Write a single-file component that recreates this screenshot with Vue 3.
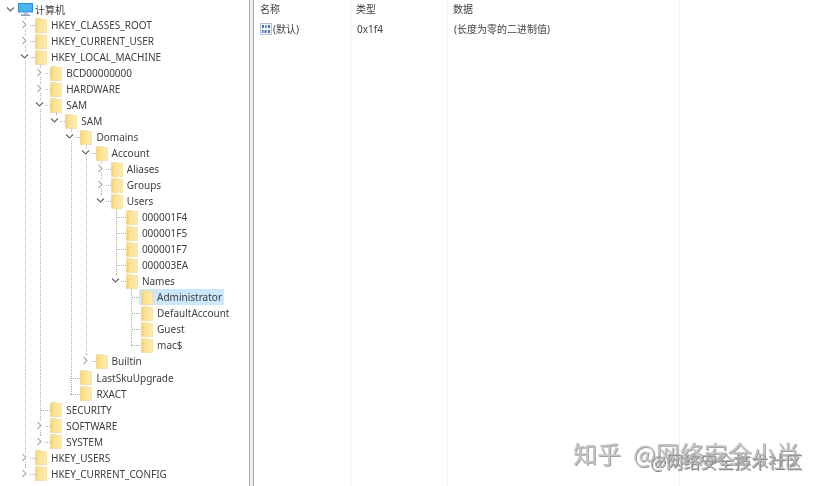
<template>
  <div class="regedit">
    <div class="tree">
      <div class="row root">
        <svg class="chev" width="9" height="9" viewBox="0 0 9 9"><path d="M1 2.5 L4.5 6 L8 2.5" /></svg>
        <svg class="pc" width="15" height="13" viewBox="0 0 15 13">
          <rect x="0" y="0" width="15" height="9.5" fill="#2f8fdc" />
          <rect x="1" y="1" width="13" height="7.5" fill="#4cb4ee" />
          <rect x="5.5" y="9.5" width="4" height="2" fill="#a9bccb" />
          <rect x="3" y="11.5" width="9" height="1.5" fill="#7f9fba" />
        </svg>
        <span class="label">计算机</span>
      </div>
      <div
        v-for="(r, i) in rows"
        :key="i"
        class="row"
        :style="{ paddingLeft: indent(r.level) + 'px' }"
      >
        <span
          v-for="g in r.guides"
          :key="g.x"
          class="guide"
          :class="{ half: g.half }"
          :style="{ left: g.x + 'px' }"
        ></span>
        <span class="slot">
          <span class="hook"></span>
          <svg v-if="r.state" class="chev" width="9" height="9" viewBox="0 0 9 9">
            <path v-if="r.state === 'open'" d="M1 2.5 L4.5 6 L8 2.5" />
            <path v-else class="closed" d="M2.5 1 L6 4.5 L2.5 8" />
          </svg>
        </span>
        <span class="item" :class="{ selected: r.selected }">
          <svg class="folder" width="12" height="15" viewBox="0 0 12 15">
            <defs>
              <linearGradient id="fold" x1="0" y1="0" x2="1" y2="0">
                <stop offset="0" stop-color="#f9dc86" />
                <stop offset="1" stop-color="#fdebb4" />
              </linearGradient>
            </defs>
            <path d="M0.5 0.5 H6 L7 1.5 H11.5 V14.5 H0.5 Z" fill="url(#fold)" stroke="#f0d68e" stroke-width="0.6" />
            <rect x="0.5" y="2.5" width="2" height="12" fill="#f6d472" />
          </svg>
          <span class="label">{{ r.name }}</span>
        </span>
      </div>
    </div>
    <div class="splitter"></div>
    <div class="list">
      <div class="col first">
        <div class="head">名称</div>
        <div class="cell">
          <svg class="bin" width="12" height="12" viewBox="0 0 12 12">
            <rect x="0.5" y="0.5" width="11" height="11" fill="#f4f7fc" stroke="#b4c3dc" />
            <path d="M2 2 H4 V5 H2 Z M5.2 2 H6.6 V5 H5.2 Z M8 2 H10 V5 H8 Z M2 7 H3.4 V10 H2 Z M4.6 7 H6.6 V10 H4.6 Z M8 7 H10 V10 H8 Z" fill="#4a6fb0" />
          </svg>
          <span>(默认)</span>
        </div>
      </div>
      <div class="col">
        <div class="head">类型</div>
        <div class="cell">0x1f4</div>
      </div>
      <div class="col wide">
        <div class="head">数据</div>
        <div class="cell">(长度为零的二进制值)</div>
      </div>
    </div>
    <div class="mark">
      <span class="zh">知乎</span><span class="author">@网络安全小肖</span>
    </div>
    <div class="mark2">@网络安全技术社区</div>
  </div>
</template>

<script setup>
const items = [
  [1, 'HKEY_CLASSES_ROOT', 'closed'],
  [1, 'HKEY_CURRENT_USER', 'closed'],
  [1, 'HKEY_LOCAL_MACHINE', 'open'],
  [2, 'BCD00000000', 'closed'],
  [2, 'HARDWARE', 'closed'],
  [2, 'SAM', 'open'],
  [3, 'SAM', 'open'],
  [4, 'Domains', 'open'],
  [5, 'Account', 'open'],
  [6, 'Aliases', 'closed'],
  [6, 'Groups', 'closed'],
  [6, 'Users', 'open'],
  [7, '000001F4', ''],
  [7, '000001F5', ''],
  [7, '000001F7', ''],
  [7, '000003EA', ''],
  [7, 'Names', 'open'],
  [8, 'Administrator', '', true],
  [8, 'DefaultAccount', ''],
  [8, 'Guest', ''],
  [8, 'mac$', ''],
  [5, 'Builtin', 'closed'],
  [4, 'LastSkuUpgrade', ''],
  [4, 'RXACT', ''],
  [2, 'SECURITY', ''],
  [2, 'SOFTWARE', 'closed'],
  [2, 'SYSTEM', 'closed'],
  [1, 'HKEY_USERS', 'closed'],
  [1, 'HKEY_CURRENT_CONFIG', 'closed']
]

function indent(level) {
  return 21 + (level - 1) * 15.15
}

// true when another node of this level follows before the branch closes
function hasNext(i, level) {
  for (let j = i + 1; j < items.length; j++) {
    if (items[j][0] < level) return false
    if (items[j][0] === level) return true
  }
  return false
}

const rows = items.map(([level, name, state, selected], i) => {
  const guides = []
  for (let l = 1; l <= level; l++) {
    const next = hasNext(i, l)
    if (l === level || next) {
      guides.push({ x: Math.floor(indent(l) + 4.7), half: l === level && !next })
    }
  }
  return { level, name, state, selected, guides }
})
</script>

<style scoped>
.regedit {
  position: relative;
  width: 819px;
  height: 486px;
  display: flex;
  overflow: hidden;
  background: #fff;
  color: #404040;
  font: 10px "Noto Sans", "Noto Sans CJK SC", sans-serif;
}
.tree {
  width: 249px;
  flex: none;
  padding-top: 1.15px;
}
.row {
  position: relative;
  display: flex;
  align-items: center;
  height: 16.022px;
  white-space: nowrap;
}
.root {
  padding-left: 6px;
}
.root .pc {
  margin: 0 2px 0 3px;
}
.guide {
  position: absolute;
  top: 0;
  height: 17px;
  border-left: 1px dotted #adadad;
}
.guide.half {
  height: 8px;
}
.slot {
  position: relative;
  width: 14px;
  height: 16px;
  flex: none;
}
.hook {
  position: absolute;
  left: 4px;
  top: 8px;
  width: 10px;
  border-top: 1px dotted #adadad;
}
.slot .chev {
  position: absolute;
  left: -1px;
  top: 3px;
  background: #fff;
}
.chev {
  flex: none;
}
.chev path {
  fill: none;
  stroke: #6a6a6a;
  stroke-width: 1.2;
}
.chev path.closed {
  stroke: #b0b0b0;
}
.item {
  position: relative;
  display: flex;
  align-items: center;
  gap: 4px;
  height: 16px;
  padding-right: 2px;
}
.item.selected {
  margin-left: -2px;
  padding-left: 2px;
  background: #cce8ff;
}
.folder {
  flex: none;
}
.label {
  filter: blur(0.25px);
}
.splitter {
  width: 3px;
  flex: none;
  background: #f0f0f0;
  border: solid #a6a6a6;
  border-width: 0 1px;
}
.list {
  display: flex;
  flex: 1;
  filter: blur(0.25px);
}
.col {
  width: 91px;
  height: 100%;
  padding-left: 5px;
  border-right: 1px solid #f2f2f2;
}
.col.first {
  width: 90px;
  padding-left: 6px;
}
.col.wide {
  width: 226px;
}
.head {
  height: 21px;
  line-height: 18px;
}
.cell {
  display: flex;
  align-items: center;
  gap: 1px;
  height: 15px;
}
.col:not(.first) .cell {
  padding-left: 1px;
}
.mark {
  position: absolute;
  left: 573px;
  top: 435px;
  color: #c6c6c6;
  font: 24px "Noto Sans CJK SC", sans-serif;
  text-shadow: 1px 1px 0 #a0a0a0;
  filter: blur(0.4px);
}
.zh {
  margin-right: 12px;
}
.mark2 {
  position: absolute;
  left: 650px;
  top: 448px;
  color: #b5b5b5;
  font: 17px "Noto Sans CJK SC", sans-serif;
  text-shadow: 1px 1px 0 #8a8a8a;
  filter: blur(0.4px);
}
</style>
